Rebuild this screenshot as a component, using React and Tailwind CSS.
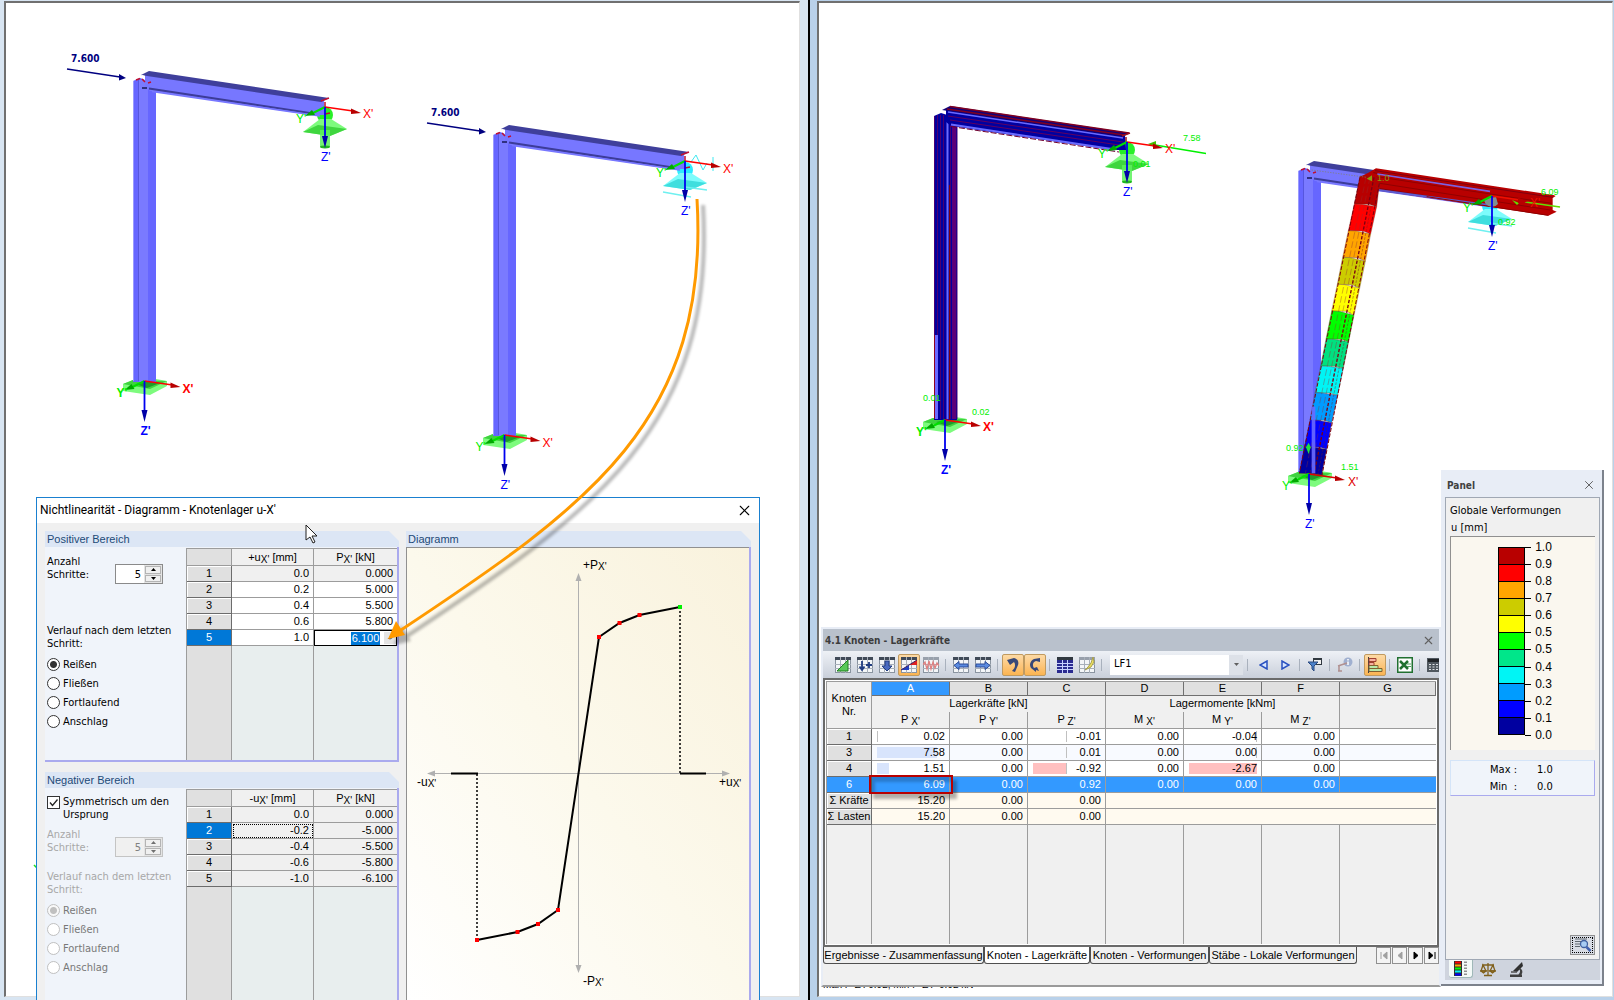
import React from "react";
import { X } from "lucide-react";

const UI = "font-['DejaVu_Sans_Condensed','DejaVu_Sans',sans-serif]";
const GRID = "font-['Liberation_Sans',Arial,sans-serif]";

/* ---------- structural model drawings ---------- */

function AxisText({ x, y, color, bold, children }) {
  return (
    <text x={x} y={y} fill={color} fontSize="12" fontWeight={bold ? 700 : 400} fontFamily="Liberation Sans, Arial, sans-serif">
      {children}
    </text>
  );
}

function Axes({ x, y, yLabel = [-29, 16], xLabel = [38, 11], bold, red = "#ff0000" }) {
  return (
    <g>
      <path d={`M${x} ${y}l-14 7`} stroke="#00e000" strokeWidth="2" />
      <polygon points={`${x - 20},${y + 9} ${x - 13},${y + 3} ${x - 10},${y + 8}`} fill="#00a800" />
      <path d={`M${x} ${y}l28 4`} stroke={red} strokeWidth="1.6" />
      <polygon points={`${x + 36},${y + 6} ${x + 26},${y + 1.5} ${x + 26},${y + 7}`} fill="#b80000" />
      <path d={`M${x} ${y}v32`} stroke="#0000f0" strokeWidth="1.8" />
      <polygon points={`${x},${y + 41} ${x - 3},${y + 29} ${x + 3},${y + 29}`} fill="#0000a8" />
      <AxisText x={x + yLabel[0]} y={y + yLabel[1]} color="#00f000" bold={bold}>Y'</AxisText>
      <AxisText x={x + xLabel[0]} y={y + xLabel[1]} color={red} bold={bold}>X'</AxisText>
      <AxisText x={x - 4} y={y + 54} color="#0000ff" bold={bold}>Z'</AxisText>
    </g>
  );
}

function BasePlate() {
  return (
    <g>
      <polygon points="123,384 133,380 156,379 167,381 167,386 150,395 123,391" fill="#7dfb7d" />
      <polygon points="123,384 133,380 167,381 150,389" fill="#3fd23f" />
      <polygon points="136,384 152,381 160,383 147,388" fill="#1f9a2c" />
    </g>
  );
}

function Bearing({ tone }) {
  if (tone === "cyan") {
    return (
      <g>
        <circle cx="325" cy="116" r="8" fill="#2cecff" />
        <polygon points="303,132 320,119 331,119 347,129 330,136" fill="#7dfcfc" />
        <polygon points="303,132 318,125 347,129 330,136" fill="#3fdede" />
        <path d="M303 138l28 5M325 133l22 3" stroke="#6ff0f0" strokeWidth="1.4" />
      </g>
    );
  }
  return (
    <g>
      <circle cx="325" cy="115" r="8" fill="#28f028" />
      <polygon points="303,132 320,119 331,119 347,129 330,136" fill="#7dfb7d" />
      <polygon points="303,132 318,125 347,129 330,136" fill="#3fd63f" />
      <rect x="320" y="130" width="10" height="17" fill="#5cf25c" opacity="0.85" />
      <ellipse cx="325" cy="147" rx="5" ry="1.4" fill="#22b822" />
    </g>
  );
}

function BlueFrame() {
  return (
    <g>
      <polygon points="133,81 140,78 156,83 156,382 133,382" fill="#6666ff" />
      <rect x="139" y="80" width="9" height="302" fill="#7a7aff" />
      <path d="M133.5 81V381" stroke="#9a9aff" />
      <path d="M138.5 80V381" stroke="#5656de" />
      <polygon points="145,75 324,101 325,115 311,115 150,91 145,87" fill="#7777ff" />
      <path d="M149 88.500L313 113.500" stroke="#3c3c98" strokeWidth="2" />
      <path d="M152 91.500L320 116" stroke="#7777ff" strokeWidth="1.500" />
      <polygon points="141,75 149,71 329,98 321,102 147,76" fill="#3f3f9b" />
      <polygon points="142,75 145,76 145,80 142,78" fill="#fff" />
      <path d="M142 88h5" stroke="#303080" strokeWidth="2" />
      <path d="M136 80l4-1.500M142 79l3 3M148 83l3-1M321 101l8-3M325 102v5M325 114l5-1" stroke="#c01030" strokeWidth="1.500" />
    </g>
  );
}

function NodalLoad() {
  return (
    <g>
      <text x="71" y="62" fill="#000080" fontSize="10" fontWeight="700" fontFamily="DejaVu Sans Condensed, DejaVu Sans, sans-serif">7.600</text>
      <path d="M67 69l53 8" stroke="#000080" strokeWidth="1.500" />
      <polygon points="126,78 119,74 119,80.500" fill="#000080" />
    </g>
  );
}

function LeftModel() {
  return (
    <svg className="block h-full w-full" role="img" aria-label="Strukturmodell">
      <g>
        <NodalLoad />
        <BasePlate />
        <Bearing tone="green" />
        <BlueFrame />
        <Axes x={325} y={107} />
        <Axes x={144.5} y={381} bold yLabel={[-28, 16]} xLabel={[38, 12]} />
      </g>
      <g transform="translate(360 54)">
        <NodalLoad />
        <BasePlate />
        <Bearing tone="cyan" />
        <BlueFrame />
        <path d="M331 108l5-7 7 15 4-7M353 103v14" fill="none" stroke="#40e8f0" />
        <Axes x={325} y={107} xLabel={[38, 12]} />
        <Axes x={144.5} y={381} xLabel={[38, 12]} />
      </g>
      <path d="M34 865l3 3" stroke="#20e020" strokeWidth="1.500" />
    </svg>
  );
}

function StressedFrame() {
  return (
    <g>
      <polygon points="133,81 140,78 156,83 156,385 133,385" fill="#0000a0" />
      <path d="M133.5 81V384M136.500 80V384M139.500 80V384M142.500 80V384M149.500 88V384M156 88V384" stroke="#4c0070" />
      <path d="M135.500 300V384" stroke="#6a6aff" strokeWidth="3" />
      <path d="M133.500 300V384" stroke="#900020" />
      <path d="M146.500 82V384" stroke="#6a6aff" strokeWidth="2" />
      <path d="M148.500 150V384" stroke="#7a0010" />
      <path d="M153 90V384" stroke="#5c0078" strokeWidth="4" />
      <polygon points="145,75 324,101 325,115 311,115 150,91 145,87" fill="#0000a0" />
      <polygon points="141,75 149,71 329,98 321,102 147,76" fill="#100078" />
      <path d="M149 71.500L328 98M146 74L323 100" stroke="#800020" strokeWidth="1.500" />
      <path d="M147 77L322 103" stroke="#6a6aff" strokeWidth="1.500" />
      <path d="M147 81L322 107M149 85L318 110" stroke="#600060" />
      <path d="M150 89.500L314 114.500" stroke="#6a6aff" strokeWidth="2" />
      <path d="M150 91.500L318 117" stroke="#700030" strokeDasharray="6 2" />
      <path d="M321 101l8-3M325 102v5" stroke="#a01020" strokeWidth="1.500" />
    </g>
  );
}

const BANDS = [
  ["#b80000", 300, 108, 360, 118, 350, 200, 283, 192],
  ["#ff0000", 283, 192, 350, 200, 332, 282, 265, 272],
  ["#ffa500", 265, 272, 332, 282, 316, 364, 248, 352],
  ["#cccc00", 248, 352, 316, 364, 299, 445, 232, 433],
  ["#ffff00", 232, 433, 299, 445, 282, 526, 215, 513],
  ["#00ff00", 215, 513, 282, 526, 266, 605, 198, 597],
  ["#00e080", 198, 597, 266, 605, 250, 685, 182, 678],
  ["#00f5f5", 182, 678, 250, 685, 233, 766, 165, 758],
  ["#009cff", 165, 758, 233, 766, 215, 848, 150, 840],
  ["#0000ff", 150, 840, 215, 848, 200, 928, 133, 920],
  ["#0000a0", 133, 920, 200, 928, 185, 1005, 118, 1000],
];

function ResultText({ x, y, color = "#00f000", children }) {
  return <text x={x} y={y} fill={color} fontSize="9" fontFamily="Liberation Sans, Arial, sans-serif">{children}</text>;
}

function RightModel() {
  return (
    <svg className="block h-full w-full" role="img" aria-label="Verformtes Modell">
      <g transform="translate(-810 0)">
        <g transform="translate(800 38)"><BasePlate /></g>
        <g transform="translate(802 35)"><Bearing tone="green" /></g>
        <g transform="translate(801 35)"><StressedFrame /></g>
        <path d="M1152 144.500L1206 153.500" stroke="#00f000" strokeWidth="1.500" />
        <polygon points="1148,144 1156,141 1156,148" fill="#40c000" />
        <Axes x={1127} y={142} />
        <Axes x={945} y={420} bold />
        <ResultText x={1183} y={141}>7.58</ResultText>
        <ResultText x={1133} y={167}>0.01</ResultText>
        <ResultText x={923} y={401}>0.01</ResultText>
        <ResultText x={972} y={415}>0.02</ResultText>

        <g transform="translate(1165 92)"><BasePlate /></g>
        <g transform="translate(1165 90)">
          <Bearing tone="cyan" />
          <BlueFrame />
        </g>
        <g transform="translate(1260 140) scale(0.33333)">
          <polygon points="325,98 348,85 880,165 887,168 878,174 878,210 890,215 865,227 360,152 296,140 305,108" fill="#b80000" />
          <path d="M345 92L878 172M340 98L690 152M360 146L640 190" stroke="#7c0010" strokeWidth="3" />
          <path d="M352 102L690 154" stroke="#8060e0" strokeWidth="5" />
          <path d="M355 150L690 196" stroke="#5c5cd0" strokeWidth="6" />
          <path d="M350 110L875 190M360 130L870 210M500 170L865 226" stroke="#900000" strokeWidth="3" />
          {BANDS.map(([c, ...p]) => (
            <polygon key={c} points={`${p[0]},${p[1]} ${(p[0] * 2 + p[2]) / 3},${p[1] + 1} ${p[2]},${p[3]} ${p[4]},${p[5]} ${p[4] - 22},${p[7] + 1} ${p[6]},${p[7]}`} fill={c} stroke="#60302080" strokeWidth="2" />
          ))}
          <path d="M300 112L118 1000M358 130L186 1005" stroke="#7c0010" strokeWidth="3" strokeDasharray="12 5" />
          <path d="M318 112L136 1000M330 112L150 1000" stroke="#90303090" strokeWidth="2" strokeDasharray="20 8" />
          <path d="M342 112L162 1003" stroke="#7c0010" strokeWidth="4" strokeDasharray="10 5" />
          <path d="M350 115L174 1003" stroke="#70202070" strokeWidth="3" strokeDasharray="8 4" />
          <polygon points="155,800 166,800 166,1000 155,1000" fill="#6a6aff" opacity="0.9" />
          <path d="M155 90L320 112" stroke="#808060" strokeWidth="2" strokeDasharray="4 4" />
          <polygon points="320,116 336,106 336,124" fill="#8a9a10" />
          <polygon points="146,908 138,922 146,942 152,922" fill="#20e040" />
        </g>
        <path d="M1525 202l35 5" stroke="#60e000" strokeWidth="1.500" />
        <polygon points="1519,203 1512,200 1517,205" fill="#60e000" />
        <path d="M1484 199a8 8 0 0 0 14 5l-2-7z" fill="#809090" />
        <Axes x={1492} y={196} red="#f01000" />
        <Axes x={1309} y={474} red="#e00000" yLabel={[-27, 16]} xLabel={[39, 12]} />
        <ResultText x={1377} y={181} color="#8a9a10">1.0</ResultText>
        <ResultText x={1541} y={195}>6.09</ResultText>
        <ResultText x={1498} y={225}>0.92</ResultText>
        <ResultText x={1286} y={451}>0.92</ResultText>
        <ResultText x={1341} y={470}>1.51</ResultText>
        <text x="823" y="988" fill="#000" fontSize="10" fontFamily="Liberation Sans, Arial, sans-serif">Max P-Z': 0.92, Min P-Z': -0.92 kN</text>
      </g>
    </svg>
  );
}

/* ---------- nonlinearity dialog ---------- */

function Sub({ children }) {
  return <span className="relative top-[2px] text-[10px]">{children}'</span>;
}

function Group({ title, className = "", children }) {
  return (
    <section className={`flex flex-col ${className}`}>
      <h2 className={`h-4 shrink-0 bg-[#dce6f5] pl-[2px] text-[11px] leading-4 text-[#1c4a78] [clip-path:polygon(0_0,calc(100%-10px)_0,100%_10px,100%_100%,0_100%)] ${GRID}`}>
        {title}
      </h2>
      {children}
    </section>
  );
}

function Spinner({ id, disabled }) {
  return (
    <div className={`flex h-5 w-12 border ${disabled ? "border-[#c4c4c4]" : "border-[#8a8a8a]"}`}>
      <input id={id} type="text" defaultValue="5" disabled={disabled} className={`h-full w-7 pr-[3px] text-right text-[11px] outline-none ${disabled ? "bg-[#f0f0f0] text-[#808080]" : "bg-white text-black"}`} />
      <div className="flex flex-1 flex-col gap-px bg-[#e4e4e4] p-px">
        {["▲", "▼"].map((a) => (
          <button key={a} type="button" disabled={disabled} aria-label={a === "▲" ? "Mehr" : "Weniger"} className={`flex flex-1 items-center justify-center border border-[#b4b4b4] bg-[#f0f0f0] ${disabled ? "text-[#707070]" : "text-black"}`}>
            <svg width="5" height="3" viewBox="0 0 5 3"><path d={a === "▲" ? "M0 3L2.500 0L5 3z" : "M0 0L2.500 3L5 0z"} fill="currentColor" /></svg>
          </button>
        ))}
      </div>
    </div>
  );
}

function Radios({ name, disabled }) {
  return (
    <div role="radiogroup" className={`flex flex-col gap-[6px] ${disabled ? "text-[#787878]" : "text-black"}`}>
      {["Reißen", "Fließen", "Fortlaufend", "Anschlag"].map((l, i) => (
        <label key={l} className="flex h-[13px] items-center gap-[3px] leading-[13px]">
          <input
            type="radio"
            name={name}
            defaultChecked={i === 0}
            disabled={disabled}
            className="size-[13px] appearance-none rounded-full border border-[#333] bg-white checked:bg-[radial-gradient(circle,#333_0,#333_3px,white_4px)] disabled:border-[#c0c0c0] disabled:checked:bg-[radial-gradient(circle,#c0c0c0_0,#c0c0c0_3px,#f8f8f8_4px)]"
          />
          {l}
        </label>
      ))}
    </div>
  );
}

function StepTable({ sign, rows, selected, negative }) {
  const line = "border-r border-b border-[#9c9c9c]";
  return (
    <table className={`h-full w-[211px] shrink-0 table-fixed border-separate border-spacing-0 border-t border-l border-[#9c9c9c] bg-[#e8eeee] text-[11px] ${GRID}`}>
      <colgroup>
        <col className="w-[45px]" />
        <col className="w-[82px]" />
        <col />
      </colgroup>
      <thead>
        <tr className="h-[17px] bg-[#f0f0f0] leading-[14px]">
          <th className={`${line} bg-[#e0e0e0]`} />
          <th className={`${line} font-normal`}>{sign}u<Sub>X</Sub> [mm]</th>
          <th className={`border-b border-[#9c9c9c] font-normal`}>P<Sub>X</Sub> [kN]</th>
        </tr>
      </thead>
      <tbody>
        {rows.map(([u, p], i) => {
          const sel = i === selected;
          const cell = negative || i === 0 ? "bg-[#f0f0f0]" : "bg-white";
          return (
            <tr key={i} className="h-4 leading-[15px]">
              <th className={`border-r border-b border-[#6c6c6c] font-normal ${sel ? "bg-[#0078d7] text-white" : "bg-[#e0e0e0] shadow-[inset_1px_1px_0_white]"}`}>{i + 1}</th>
              <td className={`${line} ${cell} pr-1 text-right ${negative && sel ? "outline-1 -outline-offset-2 outline-dotted outline-black" : ""}`}>{u}</td>
              <td className={`border-b text-right ${cell} ${!negative && sel ? "border-black p-0" : "border-[#9c9c9c] pr-1"}`}>
                {!negative && sel ? (
                  <div className="flex h-[15px] items-center justify-end border border-b-0 border-black">
                    <input aria-label="P-X' Schritt 5" defaultValue="6.100" className="h-[13px] w-[29px] bg-[#0078d7] text-center leading-3 text-white outline-none" />
                    <span className="ml-1 flex h-3 w-3 items-center justify-center bg-[#e4e4e4] text-[8px]">÷</span>
                  </div>
                ) : p}
              </td>
            </tr>
          );
        })}
        <tr>
          <td className="border-r border-[#9c9c9c] bg-[#e0e0e0]" />
          <td className="border-r border-[#9c9c9c]" />
          <td />
        </tr>
      </tbody>
    </table>
  );
}

function DiagramText({ x, y, children }) {
  return (
    <text x={x} y={y} fontSize="12" fontFamily="Liberation Sans, Arial, sans-serif">
      {children}<tspan fontSize="10" dy="1">X'</tspan>
    </text>
  );
}

function Diagram() {
  const pts = [[477, 940], [517.5, 932], [538, 924], [558, 910], [599, 637], [619.5, 623], [639.5, 615], [680, 607]];
  return (
    <svg className="block h-full w-full" role="img" aria-label="Kraft-Verschiebungs-Diagramm">
      <g transform="translate(-407 -548)">
        <path d="M578.500 580V966M434 773.500H724" stroke="#b0b0b0" />
        <path d="M578.500 573l3 8h-6zM578.500 973l3-8h-6zM427 773.500l8-3v6zM730 773.500l-8-3v6z" fill="#b0b0b0" />
        <path d="M477 940V774M680 607V773" stroke="#000" strokeWidth="1.500" strokeDasharray="2 2" />
        <path d="M451 773.500h27M680 773.500h26" stroke="#000" strokeWidth="2" />
        <polyline points={pts.map((p) => p.join(",")).join(" ")} fill="none" stroke="#000" strokeWidth="2" />
        {pts.map(([x, y], i) => <rect key={x} x={x - 2} y={y - 2} width="4" height="4" fill={i === 7 ? "#00f000" : "#ff0000"} />)}
        <DiagramText x={583} y={569}>+P</DiagramText>
        <DiagramText x={583} y={985}>-P</DiagramText>
        <DiagramText x={417} y={786}>-u</DiagramText>
        <DiagramText x={719} y={786}>+u</DiagramText>
      </g>
    </svg>
  );
}

function Dialog() {
  const pos = [["0.0", "0.000"], ["0.2", "5.000"], ["0.4", "5.500"], ["0.6", "5.800"], ["1.0", "6.100"]];
  const neg = [["0.0", "0.000"], ["-0.2", "-5.000"], ["-0.4", "-5.500"], ["-0.6", "-5.800"], ["-1.0", "-6.100"]];
  const body = "flex flex-1 justify-between border-r-2 border-[#aaaaee] bg-[#f0f4fa] pt-px pl-[2px]";
  return (
    <div role="dialog" aria-label="Nichtlinearität" className={`absolute top-[497px] bottom-0 left-9 flex w-[724px] flex-col overflow-hidden border-x border-t border-[#1a80d0] bg-[#f0f0f0] text-[11px] leading-[13px] ${UI}`}>
      <header className="flex h-[25px] shrink-0 items-center justify-between bg-white pr-[6px] pb-px pl-[3px]">
        <h1 className="font-['Roboto',sans-serif] text-xs">Nichtlinearität - Diagramm - Knotenlager u-X'</h1>
        <button type="button" aria-label="Schließen"><X size={17} strokeWidth={1.5} /></button>
      </header>
      <div className="flex flex-1 gap-[7px] pt-2 pl-2">
        <div className="flex w-[354px] flex-col gap-[10px]">
          <Group title="Positiver Bereich" className="h-[231px]">
            <div className={`${body} border-b-2`}>
              <div className="flex flex-col pt-[6px]">
                <div className="flex h-[70px] w-[116px] justify-between">
                  <label htmlFor="steps-pos" className="pt-px">Anzahl<br />Schritte:</label>
                  <div className="pt-[10px]"><Spinner id="steps-pos" /></div>
                </div>
                <p className="pb-2">Verlauf nach dem letzten<br />Schritt:</p>
                <Radios name="course-pos" />
              </div>
              <StepTable sign="+" rows={pos} selected={4} />
            </div>
          </Group>
          <Group title="Negativer Bereich" className="flex-1">
            <div className={body}>
              <div className="flex flex-col pt-[6px]">
                <label className="flex gap-[3px]">
                  <span className="relative mt-px size-[13px]">
                    <input type="checkbox" defaultChecked className="block size-[13px] appearance-none border border-[#333] bg-white" />
                    <svg viewBox="0 0 13 13" className="pointer-events-none absolute inset-0"><path d="M3 6.500l2.500 3L10.500 3.500" fill="none" stroke="#222" strokeWidth="1.300" /></svg>
                  </span>
                  <span>Symmetrisch um den<br />Ursprung</span>
                </label>
                <div className="mt-[6px] flex h-[43px] w-[116px] justify-between text-[#a8a8a8]">
                  <label htmlFor="steps-neg" className="pt-px">Anzahl<br />Schritte:</label>
                  <div className="pt-[10px]"><Spinner id="steps-neg" disabled /></div>
                </div>
                <p className="pb-2 text-[#a8a8a8]">Verlauf nach dem letzten<br />Schritt:</p>
                <Radios name="course-neg" disabled />
              </div>
              <StepTable sign="-" rows={neg} selected={1} negative />
            </div>
          </Group>
        </div>
        <Group title="Diagramm" className="w-[345px]">
          <div className="flex-1 border-r-2 border-[#aaaaee]">
            <div className="h-full border-t border-l border-[#909090] bg-linear-to-bl from-[#f9f2dd] via-[#fcf9ec] to-white">
              <Diagram />
            </div>
          </div>
        </Group>
      </div>
    </div>
  );
}

function Callout() {
  return (
    <svg className="pointer-events-none absolute inset-0 h-full w-full" aria-hidden="true">
      <defs><filter id="soft" x="-10%" y="-10%" width="120%" height="120%"><feGaussianBlur stdDeviation="1.500" /></filter></defs>
      <g filter="url(#soft)" transform="translate(6 6)" opacity="0.28">
        <path d="M697 199C710 420 590 505 398 632" fill="none" stroke="#000" strokeWidth="4" />
        <polygon points="388,639 395,619 405,635" fill="#000" />
      </g>
      <path d="M697 199C710 420 590 505 398 632" fill="none" stroke="#ff9a00" strokeWidth="3" />
      <polygon points="388,639 396,621 405,635" fill="#ff9a00" />
      <path d="M306 525v15l4-3 3 6 2-1-3-6h5z" fill="#fff" stroke="#202020" />
    </svg>
  );
}

/* ---------- results table window ---------- */

function GridIcon({ children, head = "#404a58" }) {
  return (
    <svg width="16" height="16" viewBox="0 0 16 16">
      <rect x="0.500" y="0.500" width="15" height="15" fill="#f4f6f8" stroke="#8a94a0" />
      <rect width="16" height="3" fill={head} />
      <path d="M5.500 0v16M10.500 0v16M0 7.500h16M0 11.500h16" stroke="#a8b0ba" />
      {children}
    </svg>
  );
}

function ToolButton({ label, active, children }) {
  return (
    <button type="button" aria-label={label} className={`flex size-[22px] shrink-0 items-center justify-center ${active ? "rounded-[2px] border border-[#c09a60] bg-linear-to-b from-[#fddaa5] to-[#fbb450]" : ""}`}>
      {children}
    </button>
  );
}

const Sep = () => <span className="mr-1 ml-[3px] h-3 w-px shrink-0 bg-[#a9b1bd]" />;

function Toolbar() {
  return (
    <div role="toolbar" className="flex h-[27px] shrink-0 items-center overflow-hidden bg-linear-to-b from-[#eef1f6] to-[#c9cfda] pl-[9px]">
      <ToolButton label="Bearbeiten"><GridIcon><path d="M2 14L13 3V14z" fill="#58c858" stroke="#208020" /></GridIcon></ToolButton>
      <ToolButton label="Einfügen"><GridIcon><path d="M5 4v8M2.500 9.500L5 13l2.500-3.500M12 5v6M9 8h6" fill="none" stroke="#203c80" strokeWidth="1.800" /></GridIcon></ToolButton>
      <ToolButton label="Nach unten"><GridIcon><path d="M6 4h4v5h3l-5 5-5-5h3z" fill="#4a6ac0" stroke="#203c80" /></GridIcon></ToolButton>
      <ToolButton label="Verlauf" active><GridIcon><path d="M0 13L8 8v5z" fill="#2040c0" /><path d="M8 8l8-5v5z" fill="#e02020" /><path d="M0 13L16 3" stroke="#402060" /></GridIcon></ToolButton>
      <ToolButton label="Extremwerte"><GridIcon head="#98a0ac"><path d="M0 8l2-3 2 7 2-8 2 8 2-7 2 6 2-5 2 3" fill="none" stroke="#e08080" strokeWidth="1.300" /></GridIcon></ToolButton>
      <Sep />
      <ToolButton label="Spalte links"><GridIcon><path d="M1 8.500l5-4v2.500h9v3H6v2.500z" fill="#5a8ae0" stroke="#2a4a98" /></GridIcon></ToolButton>
      <ToolButton label="Spalte rechts"><GridIcon><path d="M15 8.500l-5-4v2.500H1v3h9v2.500z" fill="#5a8ae0" stroke="#2a4a98" /></GridIcon></ToolButton>
      <Sep />
      <ToolButton label="Zurück" active><svg width="16" height="16" viewBox="0 0 16 16"><path d="M2 3l7-2c4 1 5 4 4 7l-3 7-3-1c3-3 4-6 2-9l-4 3z" fill="#384878" /></svg></ToolButton>
      <ToolButton label="Vor" active><svg width="16" height="16" viewBox="0 0 16 16"><path d="M13 1L7 2C3 4 2 8 4 11l5 4v-2l3 1-2-4-3 1C5 8 6 5 9 4l4 1z" fill="#384878" /></svg></ToolButton>
      <Sep />
      <ToolButton label="Tabelle"><svg width="16" height="16" viewBox="0 0 16 16"><rect width="16" height="16" fill="#2a2a90" /><rect width="16" height="3" fill="#303840" /><path d="M0 6.500h16M0 9.500h16M0 12.500h16M5.500 3v13M10.500 3v13" stroke="#c8d0ff" /></svg></ToolButton>
      <ToolButton label="Notiz"><GridIcon head="#98a0ac"><path d="M14 0l1 5-3 5-6 3 3-3 3-4z" fill="#ece060" stroke="#a8a050" /></GridIcon></ToolButton>
      <Sep />
      <select aria-label="Lastfall" defaultValue="LF1" className={`ml-1 h-5 w-[133px] shrink-0 appearance-none bg-white bg-[linear-gradient(#dde1e8,#dde1e8)] bg-[length:14px_100%] bg-right bg-no-repeat pl-1 text-[11px] text-black ${UI}`}>
        <option>LF1</option>
      </select>
      <svg className="mr-1 -ml-[10px] shrink-0" width="7" height="4" viewBox="0 0 7 4"><path d="M1 0h5L3.500 3z" fill="#606060" /></svg>
      <Sep />
      <ToolButton label="Vorheriger"><svg width="9" height="10" viewBox="0 0 9 10"><path d="M8 1v8L1 5z" fill="#d8e6ff" stroke="#2850c0" strokeWidth="1.500" /></svg></ToolButton>
      <ToolButton label="Nächster"><svg width="9" height="10" viewBox="0 0 9 10"><path d="M1 1v8l7-4z" fill="#d8e6ff" stroke="#2850c0" strokeWidth="1.500" /></svg></ToolButton>
      <Sep />
      <ToolButton label="Filter"><svg width="16" height="16" viewBox="0 0 16 16"><rect x="6.500" y="1.500" width="8" height="6" fill="#f0f0f0" stroke="#303840" /><path d="M6 2h9" stroke="#303840" strokeWidth="2" /><path d="M1 5h10l-4 4v5l-2-2V9z" fill="#4a80c8" stroke="#2a4a80" /></svg></ToolButton>
      <Sep />
      <ToolButton label="Info"><svg width="16" height="16" viewBox="0 0 16 16"><circle cx="11" cy="5" r="4.500" fill="#a0b0d0" /><path d="M11 4.500V8M11 2v1.500" stroke="#fff" strokeWidth="1.500" /><path d="M1 9l9-3M2 9v5M1 14h4" stroke="#b09090" strokeWidth="1.500" /></svg></ToolButton>
      <Sep />
      <ToolButton label="Balken" active><svg width="16" height="16" viewBox="0 0 16 16"><path d="M1.500 0v16" stroke="#404040" /><path d="M2 1.500h7v3H2zM2 5.500h5v3H2z" fill="#f8b0a0" stroke="#a04030" /><path d="M2 8.500h9v3H2zM2 11.500h13v3H2z" fill="#b8e8a8" stroke="#806030" /></svg></ToolButton>
      <Sep />
      <ToolButton label="Excel-Export"><svg width="16" height="16" viewBox="0 0 16 16"><rect x="0.500" y="0.500" width="15" height="15" fill="#fff" stroke="#207030" strokeWidth="2" /><path d="M3 4l8 8M11 4l-8 8" stroke="#207030" strokeWidth="2.500" /><path d="M10 7h4M10 9.500h4" stroke="#50a060" /></svg></ToolButton>
      <Sep />
      <ToolButton label="Rechner"><svg width="16" height="14" viewBox="0 0 16 14"><rect width="16" height="14" fill="#505860" /><rect x="1" y="1" width="14" height="3" fill="#202428" /><path d="M2 6.500h12M2 9h12M2 11.500h12" stroke="#e0e4e8" strokeDasharray="2 1.500" /></svg></ToolButton>
    </div>
  );
}

const HEADS = [["P", "X"], ["P", "Y"], ["P", "Z"], ["M", "X"], ["M", "Y"], ["M", "Z"]];
const ROWS = [
  ["1", "0.02", "0.00", "-0.01", "0.00", "-0.04", "0.00"],
  ["3", "7.58", "0.00", "0.01", "0.00", "0.00", "0.00"],
  ["4", "1.51", "0.00", "-0.92", "0.00", "-2.67", "0.00"],
  ["6", "6.09", "0.00", "0.92", "0.00", "0.00", "0.00"],
  ["Σ Kräfte", "15.20", "0.00", "0.00", "", "", ""],
  ["Σ Lasten", "15.20", "0.00", "0.00", "", "", ""],
];
/* in-cell value bars, keyed by row-column */
const BARS = {
  "0-1": "left-[5px] w-px bg-[#c0c0c0]",
  "1-1": "left-[5px] w-[60px] bg-[#d8e4fc]",
  "2-1": "left-[5px] w-3 bg-[#d8e4fc]",
  "0-3": "left-[38px] w-px bg-[#c0c0c0]",
  "1-3": "left-[38px] w-px bg-[#c0c0c0]",
  "2-3": "left-[5px] w-[34px] bg-[#ffc0c0] border-r border-[#c0c0c0]",
  "0-5": "left-[72px] w-px bg-[#c0c0c0]",
  "1-5": "left-[72px] w-px bg-[#c0c0c0]",
  "2-5": "left-[5px] w-[68px] bg-[#ffc0c0]",
};

function ResultsGrid() {
  const line = "border-r border-b border-[#9c9c9c]";
  return (
    <table className={`h-full w-full table-fixed border-separate border-spacing-0 border-t border-l border-[#9c9c9c] bg-[#f0f0f0] text-[11px] ${GRID}`}>
      <colgroup>
        <col className="w-[45px]" />
        {HEADS.map((_, i) => <col key={i} className="w-[78px]" />)}
        <col />
      </colgroup>
      <thead>
        <tr className="h-[14px] leading-[13px]">
          <th rowSpan={3} className={`${line} leading-[13px] font-normal`}>Knoten<br />Nr.</th>
          {["A", "B", "C", "D", "E", "F", "G"].map((c, i) => (
            <th key={c} className={`border-r border-b border-[#707070] font-normal ${i === 0 ? "bg-[#3399ff] text-white" : "bg-[#e0e0e0]"}`}>{c}</th>
          ))}
        </tr>
        <tr className="h-4 leading-[14px]">
          <th colSpan={3} className="border-r border-[#9c9c9c] align-top font-normal">Lagerkräfte [kN]</th>
          <th colSpan={3} className="border-r border-[#9c9c9c] align-top font-normal">Lagermomente [kNm]</th>
          <th />
        </tr>
        <tr className="h-[17px] leading-[14px]">
          {HEADS.map(([a, b]) => <th key={a + b} className={`${line} align-top font-normal`}>{a} <Sub>{b}</Sub></th>)}
          <th className="border-b border-[#9c9c9c]" />
        </tr>
      </thead>
      <tbody>
        {ROWS.map((r, ri) => {
          const sel = ri === 3;
          const sum = ri > 3;
          const bg = sel ? "bg-[#3399ff] text-white" : sum ? "bg-[#fffaf0]" : ri === 1 ? "bg-[#f8faff]" : "bg-white";
          return (
            <tr key={r[0]} className="h-4 leading-[15px]">
              <th className={`border-r border-b border-[#6c6c6c] font-normal whitespace-nowrap ${sel ? "bg-[#3399ff] text-white" : "bg-[#e0e0e0] shadow-[inset_1px_1px_0_white]"}`}>{r[0]}</th>
              {r.slice(1, sum ? 4 : 7).map((v, ci) => (
                <td key={ci} className={`relative ${line} ${bg} pr-1 text-right ${sel && ci === 0 ? "z-10" : ""}`}>
                  {BARS[`${ri}-${ci + 1}`] && <span className={`absolute top-[2px] bottom-[2px] ${BARS[`${ri}-${ci + 1}`]}`} />}
                  <span className="relative">{v}</span>
                  {sel && ci === 0 && <span className="absolute -top-[2px] -right-1 -bottom-[2px] -left-[3px] border-2 border-[#b80000] shadow-[4px_5px_3px_rgba(0,0,0,0.3),inset_4px_5px_3px_rgba(0,0,0,0.2)]" />}
                </td>
              ))}
              {sum ? <td colSpan={4} className={`border-b border-[#9c9c9c] ${bg}`} /> : <td className={`border-b border-[#9c9c9c] ${bg}`} />}
            </tr>
          );
        })}
        <tr>
          {Array.from({ length: 7 }, (_, i) => <td key={i} className="border-r border-[#9c9c9c]" />)}
          <td />
        </tr>
      </tbody>
    </table>
  );
}

function SheetTabs() {
  const tabs = [
    ["Ergebnisse - Zusammenfassung", "w-[161px]"],
    ["Knoten - Lagerkräfte", "w-[106px]"],
    ["Knoten - Verformungen", "w-[119px]"],
    ["Stäbe - Lokale Verformungen", "w-[148px]"],
  ];
  const nav = ["M3 2v7M9 2L5 5.500L9 9z", "M8 2L4 5.500L8 9z", "M4 2L8 5.500L4 9z", "M3 2L7 5.500L3 9zM9 2v7"];
  return (
    <div className="flex h-[17px] shrink-0 items-stretch justify-between">
      <div role="tablist" className={`flex text-[11px] leading-4 ${GRID}`}>
        {tabs.map(([t, w], i) => (
          <button key={t} type="button" role="tab" aria-selected={i === 1} className={`${w} rounded-b-[3px] border-r border-b border-l border-[#505050] text-center whitespace-nowrap ${i === 1 ? "bg-white" : "bg-[#f0f0f0]"}`}>{t}</button>
        ))}
      </div>
      <div className="flex gap-px">
        {nav.map((d, i) => (
          <button key={d} type="button" aria-label={`Blatt ${i + 1}`} className={`flex w-[15px] items-center justify-center border border-[#909090] bg-[#f4f4f4] ${i < 2 ? "text-[#a0a0a0]" : "text-black"}`}>
            <svg width="12" height="11" viewBox="0 0 12 11"><path d={d} fill="currentColor" stroke="currentColor" /></svg>
          </button>
        ))}
      </div>
    </div>
  );
}

function ResultsWindow() {
  return (
    <div className="absolute top-[627px] left-[11px] flex h-[360px] w-[620px] flex-col border-2 border-[#e8edf6] border-b-[#9a9a9a] bg-[#f0f0f0]">
      <header className="flex h-[22px] shrink-0 items-center justify-between bg-[#b9c1cc] pr-1 pl-[2px]">
        <h2 className="font-['DejaVu_Sans_Condensed',sans-serif] text-[10px] font-bold text-[#3c3c3c]">4.1 Knoten - Lagerkräfte</h2>
        <button type="button" aria-label="Schließen" className="text-[#606060]"><X size={13} strokeWidth={2} /></button>
      </header>
      <Toolbar />
      <div className="h-[269px] shrink-0 border-2 border-[#6a6a6a] bg-white p-px">
        <ResultsGrid />
      </div>
      <SheetTabs />
    </div>
  );
}

/* ---------- colour panel ---------- */

function ColourPanel() {
  const colours = ["bg-[#b80000]", "bg-[#ff0000]", "bg-[#ffa500]", "bg-[#cccc00]", "bg-[#ffff00]", "bg-[#00ff00]", "bg-[#00e68a]", "bg-[#00f5f5]", "bg-[#009cff]", "bg-[#0000ff]", "bg-[#0000a0]"];
  const values = ["1.0", "0.9", "0.8", "0.7", "0.6", "0.5", "0.5", "0.4", "0.3", "0.2", "0.1", "0.0"];
  return (
    <aside className={`absolute top-[470px] right-[10px] flex h-[516px] w-[163px] flex-col border-r-2 border-b-2 border-[#7c828c] bg-[#e8edf6] pr-[2px] pb-1 pl-1 text-[11px] leading-[13px] ${UI}`}>
      <header className="flex h-[27px] items-center justify-between pt-[3px] pr-1 pl-[2px]">
        <h2 className="text-[10px] font-bold text-[#404040]">Panel</h2>
        <button type="button" aria-label="Schließen" className="text-[#505050]"><X size={14} strokeWidth={1.5} /></button>
      </header>
      <div className="flex h-[463px] shrink-0 flex-col border border-[#a0a8b4] bg-[#f0f0f0] px-1 pt-[6px]">
        <p>Globale Verformungen</p>
        <p className="mt-1 pl-px">u [mm]</p>
        <div className="mt-[2px] flex h-[214px] justify-center border-t border-l border-[#909090] bg-[#faf7ef] pt-1 pr-1">
          <div className="mt-[6px] ml-2 flex h-[188px] w-[27px] flex-col divide-y divide-black border border-black">
            {colours.map((c) => <span key={c} className={`flex-1 ${c}`} />)}
          </div>
          <ul className={`flex h-[201px] flex-col justify-between text-xs leading-[13px] ${GRID}`}>
            {values.map((v, i) => <li key={i} className="flex items-center gap-1"><span className="h-px w-[6px] bg-black" />{v}</li>)}
          </ul>
        </div>
        <dl className="mt-[10px] grid grid-cols-[62px_auto] gap-x-5 gap-y-1 border border-t-[#d4e4f8] border-r-[#aaaaee] border-b-[#aaaaee] border-l-[#d4e4f8] bg-[#f0f4fa] py-[2px] pl-1">
          <dt className="text-right whitespace-pre">Max :</dt><dd>1.0</dd>
          <dt className="text-right whitespace-pre">Min  :</dt><dd>0.0</dd>
        </dl>
        <button type="button" aria-label="Details" className="mt-auto mb-1 flex h-5 w-[25px] items-center justify-center self-end border border-[#909090] bg-[#d8dce4] outline-1 -outline-offset-3 outline-dotted outline-black">
          <svg width="18" height="16" viewBox="0 0 18 16"><path d="M1 2h12M1 4.500h8M1 7h5M1 9.500h5" stroke="#606870" /><circle cx="10" cy="7" r="3.500" fill="#a8ccf4" stroke="#4060a0" strokeWidth="1.300" /><path d="M12.500 10l4 4" stroke="#4060b0" strokeWidth="2.500" /></svg>
        </button>
      </div>
      <div role="tablist" className="flex flex-1 items-start gap-px bg-[#cfd4de] pl-1">
        <button type="button" role="tab" aria-selected="true" aria-label="Farbskala" className="flex h-[18px] w-6 items-center justify-center rounded-b-[3px] border-r border-b border-[#a0b8b8] bg-[#f4faf8]">
          <svg width="14" height="15" viewBox="0 0 14 15">
            <rect width="8" height="15" fill="#303030" />
            {["#f00", "#ffa500", "#0f0", "#00f0f0", "#00f"].map((c, i) => <g key={c}><rect x="1" y={i * 3 + 0.5} width="6" height="2" fill={c} /><rect x="10" y={i * 3 + 0.5} width="3" height="1.500" fill="#909090" /></g>)}
          </svg>
        </button>
        <button type="button" role="tab" aria-label="Faktoren" className="flex h-[18px] w-7 items-center justify-center">
          <svg width="16" height="15" viewBox="0 0 16 15" fill="none" stroke="#80601c" strokeWidth="1.300"><path d="M8 1v12M4 13.500h8M2 3h12M3 3L1 9h5zM13 3l-3 6h5z" /><path d="M1 9h5l-2.500 2zM10 9h5l-2.500 2z" fill="#c8a040" /></svg>
        </button>
        <button type="button" role="tab" aria-label="Filter" className="flex h-[18px] w-7 items-center justify-center">
          <svg width="14" height="15" viewBox="0 0 14 15"><path d="M12 0l1 4-6 6-4-1z" fill="#303030" /><path d="M0 12.500h12V15H0zM10 6c3 2 3 5 1 7H8c2-2 3-4 1-6z" fill="#404040" /><path d="M1 10h6" stroke="#505050" strokeWidth="1.500" /></svg>
        </button>
      </div>
    </aside>
  );
}

export default function App() {
  return (
    <main className="grid h-screen grid-cols-[810fr_804fr] overflow-hidden bg-[#d8e5f2] text-black">
      <section className="relative overflow-hidden border-r-2 border-black">
        <div className="flex h-full pt-px pr-2 pb-[3px] pl-1">
          <div className="flex-1 border-t-2 border-r border-b border-l-2 border-t-[#707070] border-r-[#e0e0e0] border-b-[#e0e0e0] border-l-[#707070] bg-white" />
        </div>
        <div className="absolute inset-0"><LeftModel /></div>
        <Dialog />
        <Callout />
      </section>
      <section className="relative overflow-hidden bg-[#b9d1ea]">
        <div className="flex h-full pt-px pr-px pb-[3px] pl-[7px]">
          <div className="flex-1 border-t-2 border-r border-b border-l-2 border-t-[#707070] border-r-[#e0e0e0] border-b-[#e0e0e0] border-l-[#707070] bg-white" />
        </div>
        <div className="absolute inset-0"><RightModel /></div>
        <ResultsWindow />
        <ColourPanel />
      </section>
    </main>
  );
}
